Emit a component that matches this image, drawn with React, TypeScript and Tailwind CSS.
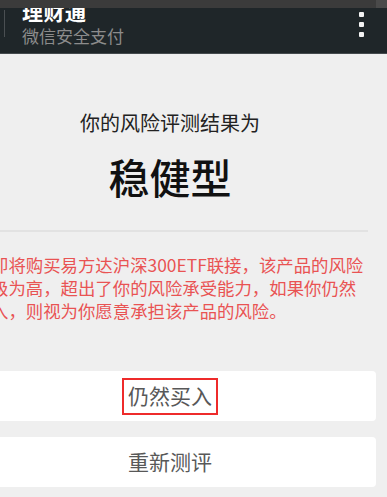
import React from "react";

const font = { fontFamily: '"Noto Sans CJK SC", "Noto Sans", sans-serif' };

export default function App() {
  return (
    <div className="w-[387px] h-[497px] overflow-hidden bg-[#efefef] flex flex-col" style={font}>
      <div className="h-[8px] bg-[#3b3b3b] flex justify-end shrink-0">
        <div className="w-[11px] h-full bg-[#4a4a4a]" />
      </div>
      <div className="h-[46px] shrink-0 bg-[#1f2629] border-b border-[#444a4d] overflow-hidden flex">
        <div className="w-[1px] h-[27px] mt-[2px] ml-[4px] bg-[#4a4f52]" />
        <div className="flex flex-col ml-[17px] mt-[-7px]">
          <div className="text-[21px] leading-[21px] font-bold text-white tracking-[0.5px]">理财通</div>
          <div className="text-[17px] leading-[17px] text-[#8c8c8c] mt-[5px]">微信安全支付</div>
        </div>
        <div className="ml-auto mr-[23px] mt-[4px] flex flex-col gap-[5px]">
          <div className="w-[5px] h-[5px] rounded-[1px] bg-[#f2f2f2]" />
          <div className="w-[5px] h-[5px] rounded-[1px] bg-[#f2f2f2]" />
          <div className="w-[5px] h-[5px] rounded-[1px] bg-[#f2f2f2]" />
        </div>
      </div>
      <div className="ml-[-36px] w-[412px] flex flex-col">
        <div className="mt-[57px] text-center text-[20px] leading-[24px] text-[#222]">你的风险评测结果为</div>
        <div className="mt-[17px] text-center text-[41px] leading-[48px] font-medium text-[#111]">稳健型</div>
        <div className="mt-[30px] mr-[8px] h-[2px] bg-[#e2e2e2]" />
        <div className="mt-[21px] pl-[27px] text-[17.4px] leading-[23px] text-[#e95353] whitespace-nowrap">
          <div>即将购买易方达沪深300ETF联接，该产品的风险</div>
          <div>级为高，超出了你的风险承受能力，如果你仍然</div>
          <div>入，则视为你愿意承担该产品的风险。</div>
        </div>
        <div className="mt-[49px] h-[50px] rounded-[4px] bg-white flex items-center justify-center">
          <div className="border-2 border-[#ee2b2b] px-[4px] h-[37px] flex items-center text-[21px] text-[#585858]">仍然买入</div>
        </div>
        <div className="mt-[16px] h-[50px] rounded-[4px] bg-white flex items-center justify-center text-[21px] text-[#585858]">
          重新测评
        </div>
      </div>
    </div>
  );
}
